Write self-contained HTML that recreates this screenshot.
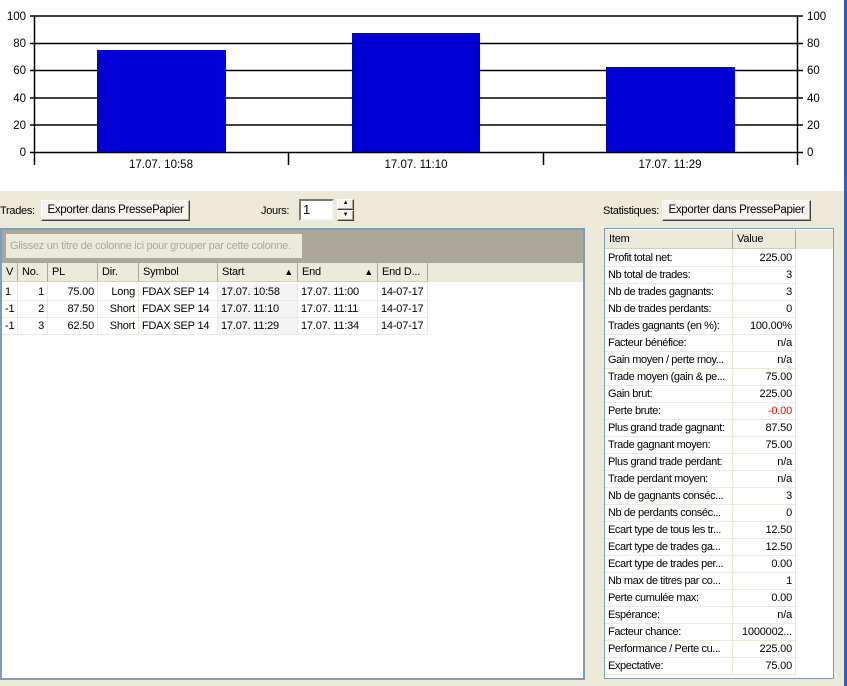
<!DOCTYPE html>
<html><head><meta charset="utf-8"><style>
*{margin:0;padding:0;box-sizing:border-box}
body{width:847px;height:686px;overflow:hidden;background:#ece9d8;font-family:"Liberation Sans",Arial,sans-serif;font-size:11px;color:#000;position:relative}
.a{position:absolute;white-space:nowrap}
.btn{position:absolute;height:21px;background:#f4f3ee;border:1px solid #fff;border-right-color:#404040;border-bottom-color:#404040;box-shadow:inset -1px -1px 0 #aca899;text-align:center;line-height:18px;font-size:11.5px;letter-spacing:-0.3px;white-space:nowrap;overflow:hidden}
.cell{position:absolute;height:17px;line-height:17px;border-right:1px solid #ebeadb;border-bottom:1px solid #ebeadb;padding:0 3px;white-space:nowrap;overflow:hidden;font-size:11px;letter-spacing:-0.2px}
.r{text-align:right}
.hd{position:absolute;height:19px;line-height:18px;background:#ebeadb;border-right:1px solid #aca899;padding:0 4px;font-size:11px;border-bottom:1px solid #d0d0bf;white-space:nowrap;overflow:hidden;letter-spacing:-0.2px}
</style></head><body>
<div class="a" style="left:0;top:0;width:844px;height:191px;background:#fff"></div>
<div class="a" style="left:844px;top:0;width:3px;height:686px;background:#2a5fd0"></div>
<svg class="a" style="left:0;top:0" width="844" height="191">
<g stroke="#000" stroke-width="1.5">
<line x1="30" y1="16" x2="803" y2="16"/><line x1="30" y1="43.5" x2="803" y2="43.5"/>
<line x1="30" y1="70.5" x2="803" y2="70.5"/><line x1="30" y1="98" x2="803" y2="98"/>
<line x1="30" y1="125" x2="803" y2="125"/><line x1="30" y1="152.5" x2="803" y2="152.5"/>
<line x1="34.5" y1="16" x2="34.5" y2="165"/><line x1="797.5" y1="16" x2="797.5" y2="165"/>
<line x1="288.5" y1="152" x2="288.5" y2="165"/><line x1="543.5" y1="152" x2="543.5" y2="165"/>
</g>
<rect x="97" y="50" width="129" height="102" fill="#0000d4"/>
<rect x="352" y="33" width="128" height="119" fill="#0000d4"/>
<rect x="606" y="67" width="129" height="85" fill="#0000d4"/>
<g font-family="Liberation Sans,Arial,sans-serif" font-size="11.5" fill="#000">
<text x="26" y="20" text-anchor="end">100</text><text x="26" y="47" text-anchor="end">80</text>
<text x="26" y="74" text-anchor="end">60</text><text x="26" y="102" text-anchor="end">40</text>
<text x="26" y="129" text-anchor="end">20</text><text x="26" y="156" text-anchor="end">0</text>
<text x="807" y="20">100</text><text x="807" y="47">80</text><text x="807" y="74">60</text>
<text x="807" y="102">40</text><text x="807" y="129">20</text><text x="807" y="156">0</text>
<text x="161" y="168" text-anchor="middle">17.07. 10:58</text>
<text x="416" y="168" text-anchor="middle">17.07. 11:10</text>
<text x="670" y="168" text-anchor="middle">17.07. 11:29</text>
</g></svg>

<div class="a" style="left:0;top:205px;font-size:11px;letter-spacing:-0.3px">Trades:</div>
<div class="btn" style="left:41px;top:200px;width:149px">Exporter dans PressePapier</div>
<div class="a" style="left:261px;top:205px;font-size:11px;letter-spacing:-0.3px">Jours:</div>
<div class="a" style="left:299px;top:199px;width:35px;height:22px;background:#fff;border:2px solid #7a7a70;border-right-color:#f0f0f0;border-bottom-color:#f0f0f0;font-size:13px;line-height:17px;padding-left:2px">1</div>
<div class="btn" style="left:337px;top:199px;width:17px;height:11px;line-height:6px;font-size:6px">▲</div>
<div class="btn" style="left:337px;top:210px;width:17px;height:11px;line-height:8px;font-size:6px">▼</div>

<div class="a" style="left:0;top:228px;width:585px;height:452px;background:#fff;border:2px solid #7f9db9"></div>
<div class="a" style="left:2px;top:230px;width:581px;height:33px;background:#aca899"></div>
<div class="a" style="left:6px;top:234px;width:296px;height:24px;background:#ebeadb;color:#aca899;line-height:24px;padding-left:4px;font-size:11px;letter-spacing:-0.3px;overflow:hidden">Glissez un titre de colonne ici pour grouper par cette colonne.</div>
<div class="a" style="left:2px;top:263px;width:581px;height:19px;background:#ebeadb"></div>
<div class="hd" style="left:2px;top:263px;width:16px;padding:0 4px">V</div>
<div class="hd" style="left:18px;top:263px;width:30px">No.</div>
<div class="hd" style="left:48px;top:263px;width:50px">PL</div>
<div class="hd" style="left:98px;top:263px;width:41px">Dir.</div>
<div class="hd" style="left:139px;top:263px;width:79px">Symbol</div>
<div class="hd" style="left:218px;top:263px;width:80px">Start<span style="position:absolute;right:4px;font-size:9px">▲</span></div>
<div class="hd" style="left:298px;top:263px;width:80px">End<span style="position:absolute;right:4px;font-size:9px">▲</span></div>
<div class="hd" style="left:378px;top:263px;width:50px">End D...</div>

<div class="cell" style="left:2px;top:284px;width:16px">1</div><div class="cell r" style="left:18px;top:284px;width:30px">1</div><div class="cell r" style="left:48px;top:284px;width:50px">75.00</div><div class="cell r" style="left:98px;top:284px;width:41px">Long</div><div class="cell" style="left:139px;top:284px;width:79px">FDAX SEP 14</div><div class="cell" style="left:218px;top:284px;width:80px;background:#f4f4f4">17.07. 10:58</div><div class="cell" style="left:298px;top:284px;width:80px">17.07. 11:00</div><div class="cell" style="left:378px;top:284px;width:50px">14-07-17</div>
<div class="cell" style="left:2px;top:301px;width:16px">-1</div><div class="cell r" style="left:18px;top:301px;width:30px">2</div><div class="cell r" style="left:48px;top:301px;width:50px">87.50</div><div class="cell r" style="left:98px;top:301px;width:41px">Short</div><div class="cell" style="left:139px;top:301px;width:79px">FDAX SEP 14</div><div class="cell" style="left:218px;top:301px;width:80px;background:#f4f4f4">17.07. 11:10</div><div class="cell" style="left:298px;top:301px;width:80px">17.07. 11:11</div><div class="cell" style="left:378px;top:301px;width:50px">14-07-17</div>
<div class="cell" style="left:2px;top:318px;width:16px">-1</div><div class="cell r" style="left:18px;top:318px;width:30px">3</div><div class="cell r" style="left:48px;top:318px;width:50px">62.50</div><div class="cell r" style="left:98px;top:318px;width:41px">Short</div><div class="cell" style="left:139px;top:318px;width:79px">FDAX SEP 14</div><div class="cell" style="left:218px;top:318px;width:80px;background:#f4f4f4">17.07. 11:29</div><div class="cell" style="left:298px;top:318px;width:80px">17.07. 11:34</div><div class="cell" style="left:378px;top:318px;width:50px">14-07-17</div>

<div class="a" style="left:603px;top:205px;font-size:11px;letter-spacing:-0.3px">Statistiques:</div>
<div class="btn" style="left:662px;top:200px;width:149px">Exporter dans PressePapier</div>
<div class="a" style="left:604px;top:228px;width:230px;height:451px;background:#fff;border:1px solid #7f9db9"></div>
<div class="a" style="left:605px;top:230px;width:228px;height:19px;background:#ebeadb"></div>
<div class="hd" style="left:605px;top:230px;width:128px">Item</div>
<div class="hd" style="left:733px;top:230px;width:63px">Value</div>
<div id="st"></div>
<script>
var d=[["Profit total net:","225.00"],["Nb total de trades:","3"],["Nb de trades gagnants:","3"],["Nb de trades perdants:","0"],["Trades gagnants (en %):","100.00%"],["Facteur bénéfice:","n/a"],["Gain moyen / perte moy...","n/a"],["Trade moyen (gain &amp; pe...","75.00"],["Gain brut:","225.00"],["Perte brute:","-0.00"],["Plus grand trade gagnant:","87.50"],["Trade gagnant moyen:","75.00"],["Plus grand trade perdant:","n/a"],["Trade perdant moyen:","n/a"],["Nb de gagnants conséc...","3"],["Nb de perdants conséc...","0"],["Ecart type de tous les tr...","12.50"],["Ecart type de trades ga...","12.50"],["Ecart type de trades per...","0.00"],["Nb max de titres par co...","1"],["Perte cumulée max:","0.00"],["Espérance:","n/a"],["Facteur chance:","1000002..."],["Performance / Perte cu...","225.00"],["Expectative:","75.00"]];
var h="";for(var i=0;i<d.length;i++){var t=250+i*17;h+='<div class="cell" style="left:605px;top:'+t+'px;width:128px;letter-spacing:-0.4px">'+d[i][0]+'</div><div class="cell r" style="left:733px;top:'+t+'px;width:63px'+(i==9?';color:#f00':'')+'">'+d[i][1]+'</div>';}
document.getElementById("st").innerHTML=h;
</script>
</body></html>
